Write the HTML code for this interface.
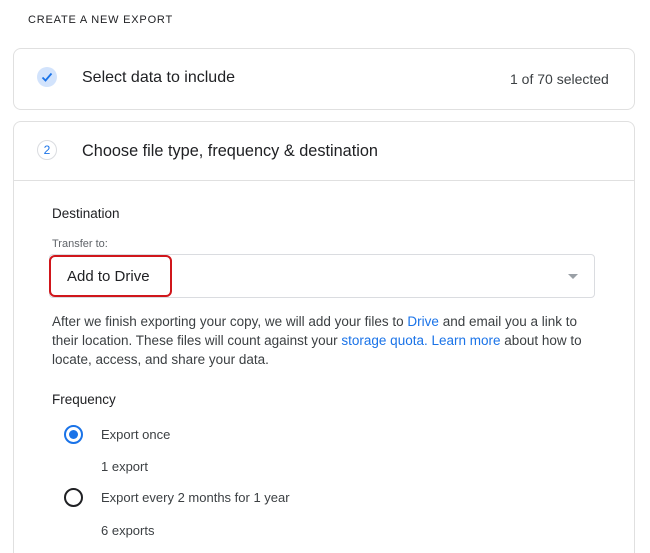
<!DOCTYPE html>
<html style="height:553px;overflow:hidden"><head><style>
body{margin:0;width:650px;height:553px;background:#fff;font-family:"Liberation Sans",Arial,sans-serif;color:#202124;position:relative;overflow:hidden}
.a{position:absolute;white-space:nowrap}
.card{position:absolute;border:1px solid #e0e0e0;border-radius:8px;background:#fff}
a{color:#1a73e8;text-decoration:none}
</style></head><body>
<div class="a" style="left:28px;top:14px;font-size:11px;letter-spacing:0.8px;color:#202124">CREATE A NEW EXPORT</div>
<div class="card" style="left:13px;top:48px;width:620px;height:60px"></div>
<div class="a" style="left:37px;top:67px;width:20px;height:20px;border-radius:50%;background:#d2e3fc"></div>
<svg class="a" style="left:37px;top:67px" width="20" height="20"><path d="M5.5 10.5l3 3 6-7" stroke="#1a73e8" stroke-width="1.8" fill="none"/></svg>
<div class="a" style="left:82px;top:69px;font-size:16px">Select data to include</div>
<div class="a" style="left:510px;top:71px;font-size:14px;color:#3c4043">1 of 70 selected</div>
<div class="card" style="left:13px;top:121px;width:620px;height:432px;border-bottom:none;border-radius:8px 8px 0 0"></div>
<div class="a" style="left:14px;top:180px;width:620px;height:1px;background:#e0e0e0"></div>
<div class="a" style="left:37px;top:140px;width:20px;height:20px;border-radius:50%;border:1px solid #dadce0;box-sizing:border-box;font-size:12px;color:#1a73e8;text-align:center;line-height:18px">2</div>
<div class="a" style="left:82px;top:142px;font-size:16.3px">Choose file type, frequency &amp; destination</div>
<div class="a" style="left:52px;top:206px;font-size:13.5px">Destination</div>
<div class="a" style="left:52px;top:238px;font-size:11px;color:#5f6368">Transfer to:</div>
<div class="a" style="left:49px;top:254px;width:546px;height:44px;border:1px solid #dadce0;border-radius:4px;box-sizing:border-box"></div>
<div class="a" style="left:49px;top:255px;width:123px;height:42px;border:2px solid #d0161b;border-radius:6px;box-sizing:border-box"></div>
<div class="a" style="left:67px;top:268px;font-size:15px">Add to Drive</div>
<div class="a" style="left:568px;top:274px;width:0;height:0;border-left:5px solid transparent;border-right:5px solid transparent;border-top:5px solid #9aa0a6"></div>
<div class="a" style="left:52px;top:312px;font-size:13.5px;line-height:19px;color:#3c4043">After we finish exporting your copy, we will add your files to <a>Drive</a> and email you a link to<br>their location. These files will count against your <a>storage quota.</a> <a>Learn more</a> about how to<br>locate, access, and share your data.</div>
<div class="a" style="left:52px;top:392px;font-size:13.5px">Frequency</div>
<div class="a" style="left:64px;top:425px;width:19px;height:19px;border:2px solid #1a73e8;border-radius:50%;box-sizing:border-box"></div>
<div class="a" style="left:69px;top:430px;width:9px;height:9px;background:#1a73e8;border-radius:50%"></div>
<div class="a" style="left:101px;top:427px;font-size:13px;color:#3c4043">Export once</div>
<div class="a" style="left:101px;top:459px;font-size:13px;color:#3c4043">1 export</div>
<div class="a" style="left:64px;top:488px;width:19px;height:19px;border:2px solid #202124;border-radius:50%;box-sizing:border-box"></div>
<div class="a" style="left:101px;top:490px;font-size:13px;color:#3c4043">Export every 2 months for 1 year</div>
<div class="a" style="left:101px;top:523px;font-size:13px;color:#3c4043">6 exports</div>
</body></html>
